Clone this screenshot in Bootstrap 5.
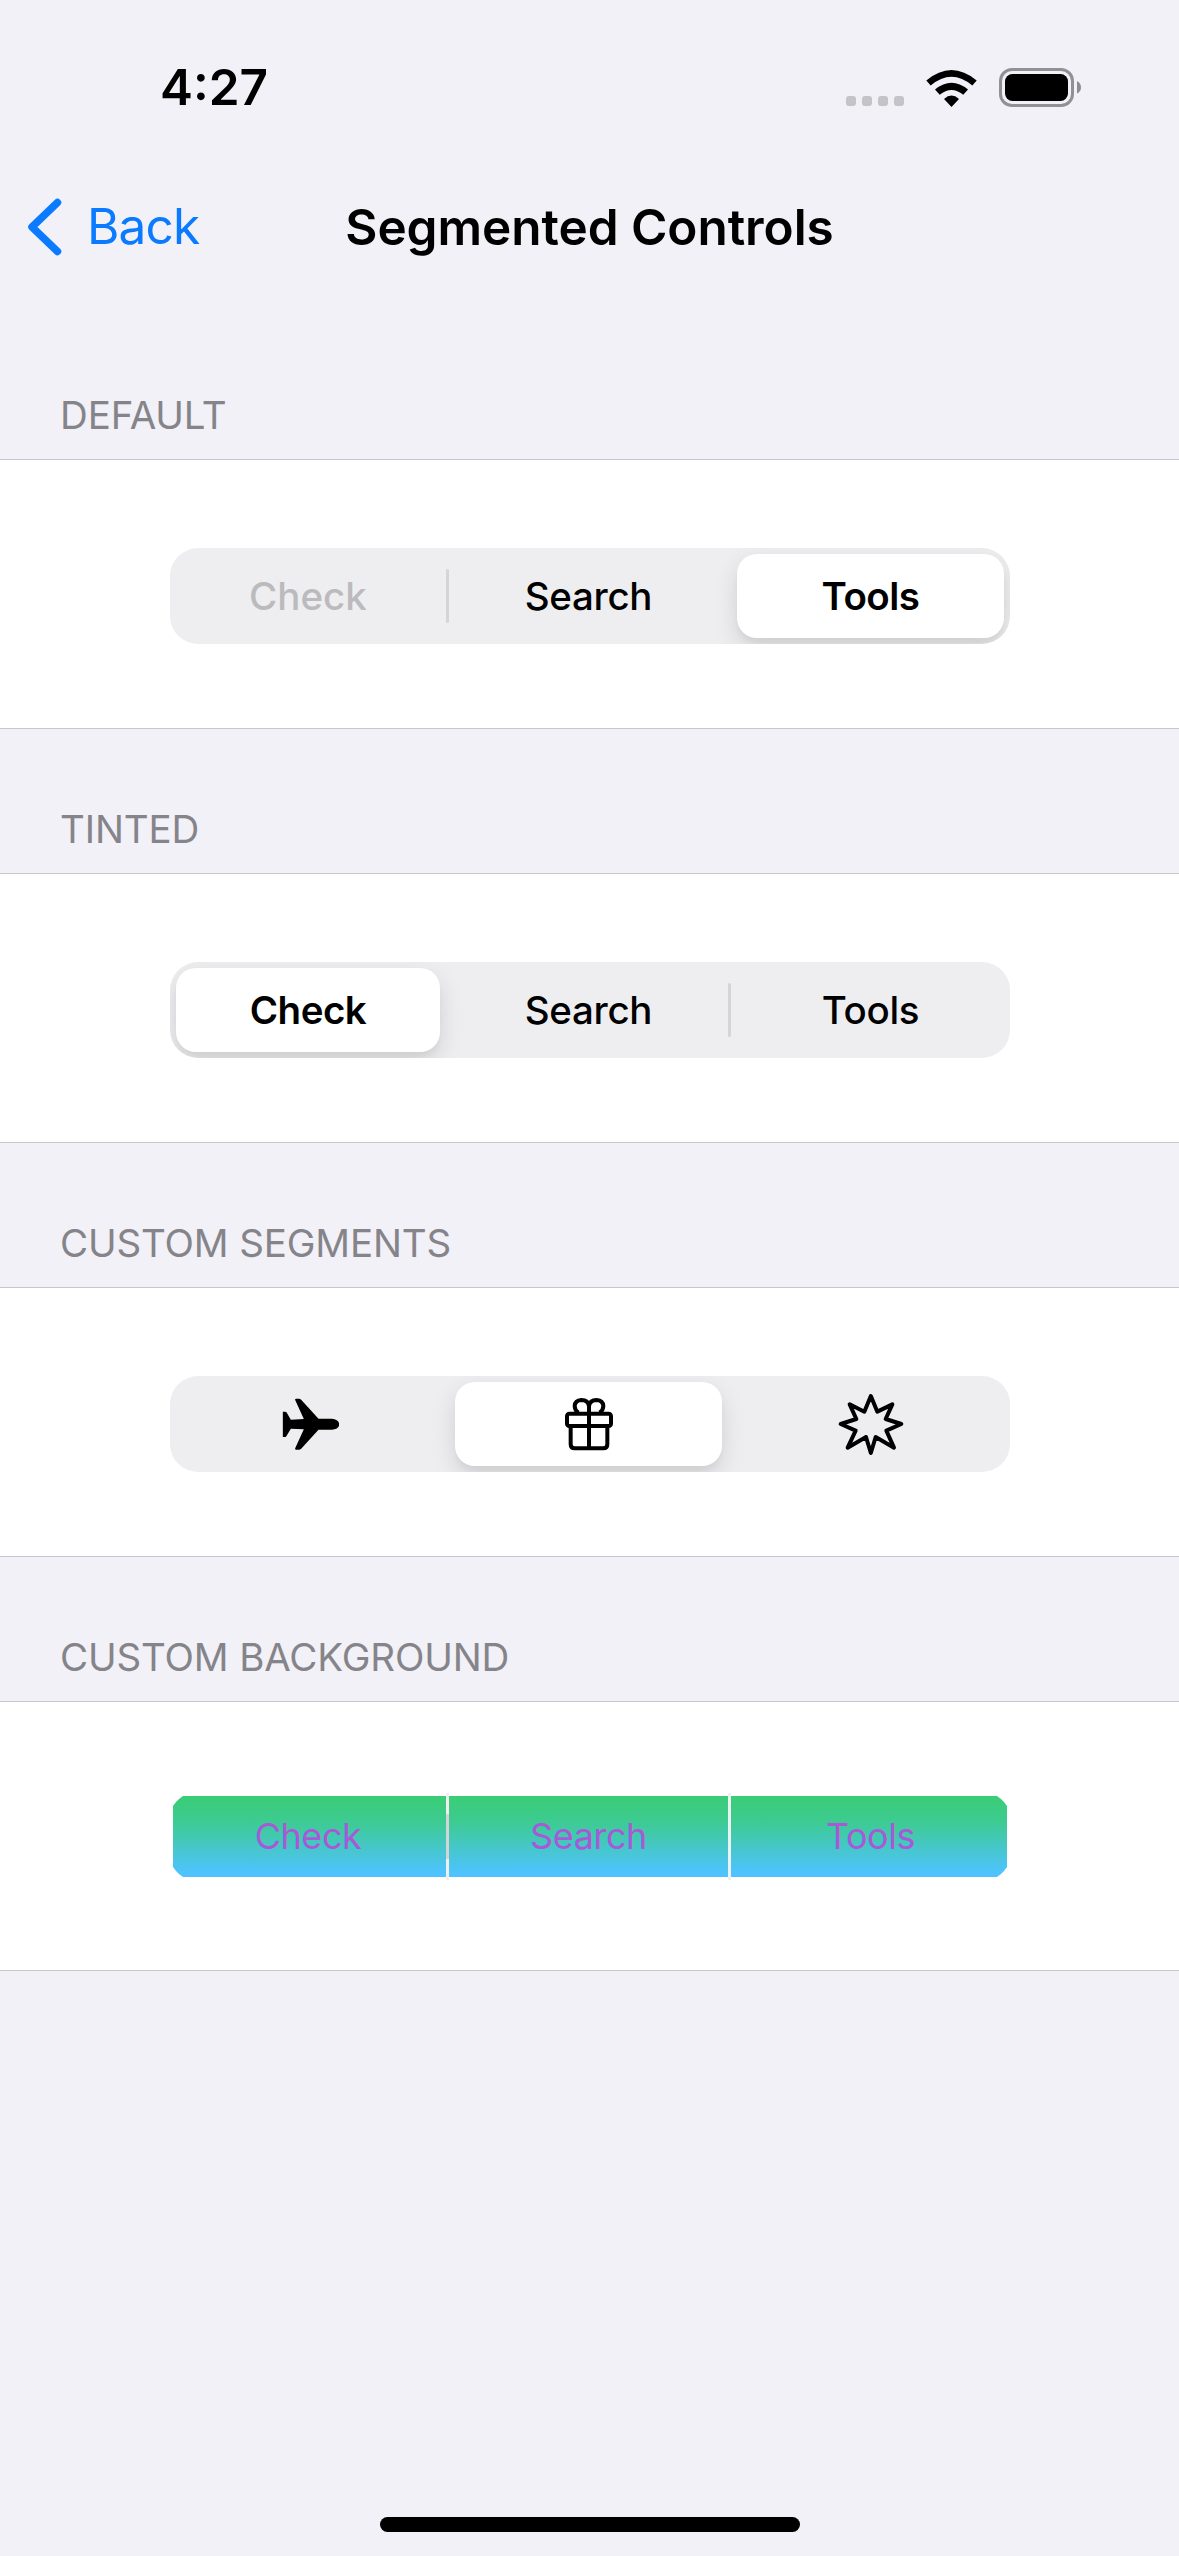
<!DOCTYPE html>
<html lang="en">
<head>
<meta charset="utf-8">
<meta name="viewport" content="width=device-width, initial-scale=1">
<title>Segmented Controls</title>
<link href="https://cdn.jsdelivr.net/npm/bootstrap@5.3.0/dist/css/bootstrap.min.css" rel="stylesheet">
<style>
  body { background: #f2f1f7; color: #000; font-family: Inter, "Liberation Sans", sans-serif; line-height: 1; }
  .screen { height: 2556px; overflow: hidden; }
  svg { display: block; flex: none; }
  .statusbar { height: 176px; padding: 0 97px 0 160px; }
  .clock { font-size: 49.5px; font-weight: 600; letter-spacing: 0; }
  .signal-dots { gap: 6px; padding-top: 25px; margin-right: 22px; }
  .signal-dots i { width: 10px; height: 10px; border-radius: 3px; background: #c4c3c8; }
  .battery { margin-left: 22px; }
  .topbar { height: 103px; padding: 0 28px; margin-bottom: 94px; }
  .back-link { color: #0a7aff; font-size: 49.5px; letter-spacing: -.8px; gap: 25px; text-decoration: none; }
  .screen-title { font-size: 49.5px; font-weight: 600; letter-spacing: -.05px; }
  .side { flex: 1 0 0; }
  .group-title { height: 86px; padding: 19px 0 0 60px; margin: 0; font-size: 38.5px; font-weight: 400; letter-spacing: -.15px; color: #85848a; line-height: 1.2; }
  .group-cell { height: 270px; background: #fff; border-top: 1px solid #c8c7cc; border-bottom: 1px solid #c8c7cc; margin-bottom: 58px; padding: 88px 169px 0 170px; }
  .segmented { height: 96px; border-radius: 28px; background: #eeeef0; overflow: hidden; }
  .seg { flex: 1 0 0; padding: 6px; display: flex; }
  .seg-first { flex: none; width: 276px; }
  .seg-face { flex: 1; border-radius: 20px; font-size: 38.5px; font-weight: 450; letter-spacing: -.3px; }
  .seg-on { background: #fff; font-weight: 600; letter-spacing: -.5px; box-shadow: 0 9px 24px rgba(0,0,0,.12), 0 6px 4px rgba(0,0,0,.03); }
  .seg-off { color: #bbbbbd; letter-spacing: 0; }
  .sep { width: 3px; height: 54px; border-radius: 2px; background: #d5d5d8; }
  .sep-none { background: transparent; }
  .gradient-bar { height: 87px; margin: 3px 3px 0 3px; }
  .gradient-seg { height: 81px; flex: 1 0 0; padding-bottom: 2px; background: linear-gradient(#3acd76, #3dcb92 32%, #4ec3fd 94%); color: #a759d8; font-size: 36px; letter-spacing: -.45px; }
  .gradient-first { flex: none; width: 273px; padding-right: 3px; clip-path: polygon(0 10px, 3px 6px, 6px 3px, 10px 0, 100% 0, 100% 100%, 10px 100%, 6px 78px, 3px 75px, 0 71px); }
  .gradient-last { flex: none; width: 276px; padding-left: 3px; clip-path: polygon(0 0, 266px 0, 270px 3px, 273px 6px, 100% 10px, 100% 71px, 273px 75px, 270px 78px, 266px 100%, 0 100%); }
  .gsep { width: 3px; height: 87px; background: #eef1f1; }
  .gsep-dark { background: linear-gradient(#efeff0 21px, #d3d4d6 21px 66px, #efeff0 66px); }
  .homebar { width: 420px; height: 15px; border-radius: 8px; background: #000; margin-bottom: 24px; }
</style>
<script src="https://cdn.jsdelivr.net/npm/bootstrap@5.3.0/dist/js/bootstrap.bundle.min.js"></script>
</head>
<body>
<div class="screen d-flex flex-column">
  <header class="statusbar d-flex align-items-center justify-content-between">
    <span class="clock">4:27</span>
    <div class="d-flex align-items-center">
      <span class="signal-dots d-flex"><i></i><i></i><i></i><i></i></span>
      <svg width="51" height="38" viewBox="926 68 51 38">
        <path d="M926.300 79.500 Q951.500 58.500 976.700 79.500 L972.300 84.500 Q951.500 67 930.700 84.500 Z"/>
        <path d="M935 88.500 Q951.500 75 968 88.500 L963.300 93.800 Q951.500 84.300 939.700 93.800 Z"/>
        <path d="M944 98 Q951.500 91.200 959 98 L951.500 106 Z"/>
      </svg>
      <svg class="battery" width="83" height="40" viewBox="999 68 83 40">
        <rect x="1000.500" y="69.500" width="72" height="36" rx="11.500" fill="none" stroke="#919095" stroke-width="3"/>
        <rect x="1005" y="74" width="63" height="27" rx="7.500"/>
        <path d="M1077 81 Q1081 83 1081 87.500 Q1081 91.500 1077 93.500 Z" fill="#8d8c92"/>
      </svg>
    </div>
  </header>
  <nav class="topbar d-flex align-items-center">
    <div class="side"><a href="#" class="back-link d-inline-flex align-items-center">
      <svg width="34" height="58" viewBox="0 0 34 58"><path d="M29.500 4.500 L4 29 L29.500 53.500" fill="none" stroke="#0a7aff" stroke-width="7.500" stroke-linecap="round" stroke-linejoin="round"/></svg>
      <span>Back</span></a></div>
    <h1 class="screen-title mb-0">Segmented Controls</h1>
    <div class="side"></div>
  </nav>
  <main>
    <section>
      <h2 class="group-title">DEFAULT</h2>
      <div class="group-cell">
        <div class="segmented d-flex align-items-center">
          <div class="seg seg-first h-100"><span class="seg-face seg-off d-flex align-items-center justify-content-center">Check</span></div>
          <span class="sep"></span>
          <div class="seg h-100"><span class="seg-face d-flex align-items-center justify-content-center">Search</span></div>
          <span class="sep sep-none"></span>
          <div class="seg h-100"><span class="seg-face seg-on d-flex align-items-center justify-content-center">Tools</span></div>
        </div>
      </div>
    </section>
    <section>
      <h2 class="group-title">TINTED</h2>
      <div class="group-cell">
        <div class="segmented d-flex align-items-center">
          <div class="seg seg-first h-100"><span class="seg-face seg-on d-flex align-items-center justify-content-center">Check</span></div>
          <span class="sep sep-none"></span>
          <div class="seg h-100"><span class="seg-face d-flex align-items-center justify-content-center">Search</span></div>
          <span class="sep"></span>
          <div class="seg h-100"><span class="seg-face d-flex align-items-center justify-content-center">Tools</span></div>
        </div>
      </div>
    </section>
    <section>
      <h2 class="group-title">CUSTOM SEGMENTS</h2>
      <div class="group-cell">
        <div class="segmented d-flex align-items-center">
          <div class="seg seg-first h-100"><span class="seg-face d-flex align-items-center justify-content-center">
            <svg width="62" height="56" viewBox="51.500 79 186 168"><path d="M69 126 H76 Q79 126 80 128 L93 150 L132 148 L106 91 Q105 87 109 87 H117 Q121 87 124 90 L176 147 H216 Q238 150 238 164 Q238 178 216 180 H176 L124 237 Q121 240 117 240 H109 Q105 240 106 236 L132 179 L93 177 L80 199 Q79 202 76 202 H69 Z"/></svg>
          </span></div>
          <span class="sep sep-none"></span>
          <div class="seg h-100"><span class="seg-face seg-on d-flex align-items-center justify-content-center">
            <svg width="56" height="56" viewBox="903 80 168 168"><g fill="none" stroke="#000" stroke-width="12" stroke-linejoin="round"><rect x="921" y="133" width="132" height="37" rx="7"/><path d="M932 171 V225 Q932 237 944 237 H1030 Q1042 237 1042 225 V171 M987 110 V237"/><path d="M987 130 V111 Q985 92 964 92 Q945 93 944 110 Q944 122 955 130 M987 111 Q989 92 1010 92 Q1029 93 1030 110 Q1030 122 1019 130"/></g></svg>
          </span></div>
          <span class="sep sep-none"></span>
          <div class="seg h-100"><span class="seg-face d-flex align-items-center justify-content-center">
            <svg width="66" height="66" viewBox="412 63 198 198"><path d="M510.500 78 L530 125 L575 103 L555 147 L602 162 L557 182 L580 233 L525 201 L510.500 249 L496 201 L441 233 L465 182 L420 162 L467 147 L447 103 L491 125 Z" fill="none" stroke="#000" stroke-width="12" stroke-linejoin="round"/></svg>
          </span></div>
        </div>
      </div>
    </section>
    <section>
      <h2 class="group-title">CUSTOM BACKGROUND</h2>
      <div class="group-cell">
        <div class="gradient-bar d-flex align-items-center">
          <div class="gradient-seg gradient-first d-flex align-items-center justify-content-center">Check</div>
          <span class="gsep gsep-dark"></span>
          <div class="gradient-seg d-flex align-items-center justify-content-center">Search</div>
          <span class="gsep"></span>
          <div class="gradient-seg gradient-last d-flex align-items-center justify-content-center">Tools</div>
        </div>
      </div>
    </section>
  </main>
  <div class="homebar mt-auto mx-auto"></div>
</div>
</body>
</html>
